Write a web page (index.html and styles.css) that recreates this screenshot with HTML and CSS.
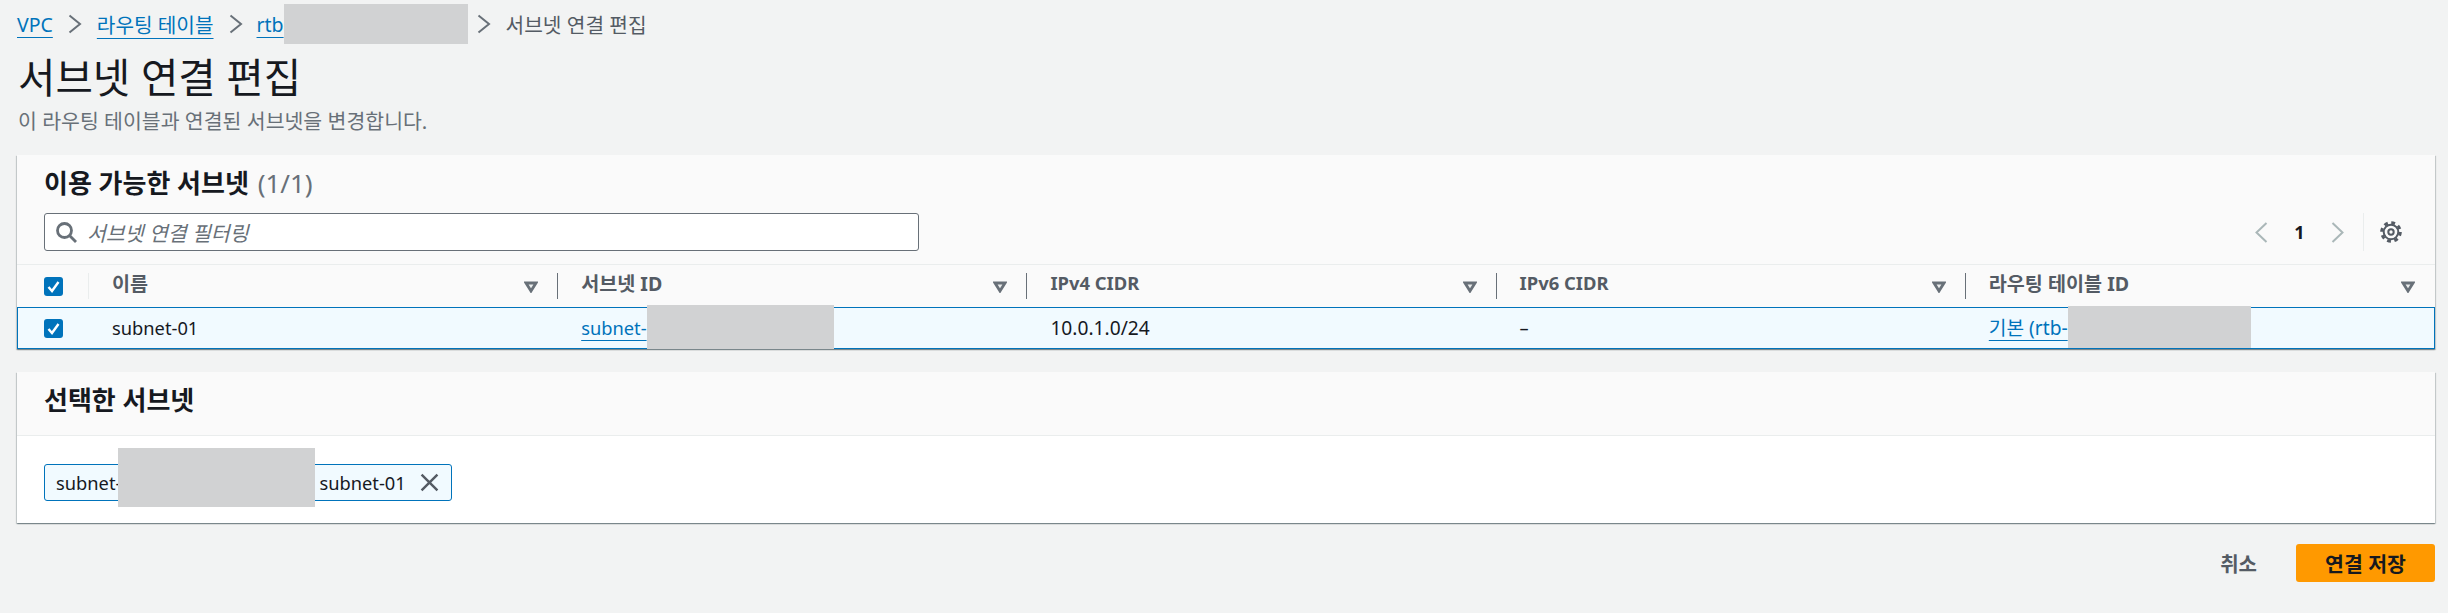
FILE: index.html
```html
<!DOCTYPE html>
<html lang="ko">
<head>
<meta charset="utf-8">
<title>서브넷 연결 편집</title>
<link rel="stylesheet" href="styles.css">
</head>
<body>
<nav class="crumbs">
  <a class="link" href="#">VPC</a>
  <svg class="crumb-sep" viewBox="0 0 14 20"><path d="M1.500 1.500 12 10 1.500 18.500"/></svg>
  <a class="link crumb-ko" href="#">라우팅 테이블</a>
  <svg class="crumb-sep" viewBox="0 0 14 20"><path d="M1.500 1.500 12 10 1.500 18.500"/></svg>
  <span class="crumb-id"><a class="link" href="#">rtb</a><span class="mask mask-crumb"></span></span>
  <svg class="crumb-sep" viewBox="0 0 14 20"><path d="M1.500 1.500 12 10 1.500 18.500"/></svg>
  <span class="crumb-current">서브넷 연결 편집</span>
</nav>
<header class="page-head">
  <h1>서브넷 연결 편집</h1>
  <p>이 라우팅 테이블과 연결된 서브넷을 변경합니다.</p>
</header>

<section class="card">
  <div class="card-head">
    <h2>이용 가능한 서브넷 <span class="count">(1/1)</span></h2>
    <div class="tools">
      <label class="filter">
        <svg class="search" viewBox="0 0 21 21"><circle cx="8.500" cy="8.500" r="7"/><path d="M13.500 13.500 20 20"/></svg>
        <span class="placeholder">서브넷 연결 필터링</span>
      </label>
      <div class="pager">
        <svg class="page-arrow" viewBox="0 0 13 21"><path d="M11.500 1 1.500 10.500 11.500 20"/></svg>
        <span class="page-num">1</span>
        <svg class="page-arrow" viewBox="0 0 13 21"><path d="M1.500 1 11.500 10.500 1.500 20"/></svg>
        <span class="pager-gear">
          <svg class="gear" viewBox="0 0 22 22"><circle class="gear-teeth" cx="11" cy="11" r="9.300"/><circle class="gear-ring" cx="11" cy="11" r="7.300"/><circle class="gear-ring" cx="11" cy="11" r="2.700"/></svg>
        </span>
      </div>
    </div>
  </div>
  <div class="grid grid-head">
    <div class="cell-check th-check"><span class="check"><svg viewBox="0 0 19 19"><path d="M4.500 10 8 14 14.500 5"/></svg></span></div>
    <div class="th"><span>이름</span><svg class="sort" viewBox="0 0 14 12"><path d="M2 2h10L7 10z"/></svg></div>
    <div class="th"><span>서브넷 ID</span><svg class="sort" viewBox="0 0 14 12"><path d="M2 2h10L7 10z"/></svg></div>
    <div class="th th-latin"><span>IPv4 CIDR</span><svg class="sort" viewBox="0 0 14 12"><path d="M2 2h10L7 10z"/></svg></div>
    <div class="th th-latin"><span>IPv6 CIDR</span><svg class="sort" viewBox="0 0 14 12"><path d="M2 2h10L7 10z"/></svg></div>
    <div class="th th-last"><span>라우팅 테이블 ID</span><svg class="sort" viewBox="0 0 14 12"><path d="M2 2h10L7 10z"/></svg></div>
  </div>
  <div class="grid grid-row">
    <div class="cell-check"><span class="check"><svg viewBox="0 0 19 19"><path d="M4.500 10 8 14 14.500 5"/></svg></span></div>
    <div class="td">subnet-01</div>
    <div class="td"><a class="link" href="#">subnet-</a><span class="mask mask-subnet"></span></div>
    <div class="td td-ip">10.0.1.0/24</div>
    <div class="td">–</div>
    <div class="td"><a class="link link-ko" href="#">기본 (rtb-</a><span class="mask mask-rtb"></span></div>
  </div>
</section>

<section class="card card-selected">
  <div class="card-head card-head-selected">
    <h2>선택한 서브넷</h2>
  </div>
  <div class="card-body">
    <div class="token">
      <span>subnet-</span><span class="mask mask-token"></span><span class="token-name">subnet-01</span>
      <svg class="close" viewBox="0 0 18 18"><path d="M1.500 1.500 16.500 16.500M16.500 1.500 1.500 16.500"/></svg>
    </div>
  </div>
</section>

<footer class="actions">
  <span class="cancel">취소</span>
  <span class="save">연결 저장</span>
</footer>
</body>
</html>
```
FILE: styles.css
```css
* { box-sizing: border-box; }
html, body { height: 100%; }
body {
  margin: 0;
  padding: 0 13px 0 17px;
  background: #f2f3f3;
  color: #16191f;
  font-family: "Noto Sans", "Noto Sans CJK KR", sans-serif;
  font-size: 18.300px;
  overflow: hidden;
}
.link {
  color: #0073bb;
  text-decoration: underline;
  text-underline-offset: 5px;
  text-decoration-thickness: 1px;
}
.mask { display: block; background: #d1d2d3; flex: none; }

.crumbs { display: flex; align-items: center; height: 48px; font-size: 19.500px; white-space: nowrap; }
.crumb-ko { font-size: 20.200px; }
.crumb-sep { width: 14px; height: 20px; margin: 0 15px; flex: none; }
.crumb-sep path { fill: none; stroke: #687078; stroke-width: 2; }
.crumb-id { display: flex; align-items: center; margin-left: -1px; }
.mask-crumb { width: 184px; height: 40px; margin-right: -6px; }
.crumb-current { font-size: 20.250px; color: #545b64; }

.page-head { height: 107px; }
h1 { margin: 0; padding: 4px 0 0 1px; font-size: 40.700px; line-height: 50px; font-weight: 400; }
.page-head p { margin: 0; padding-left: 1px; font-size: 20.500px; line-height: 38px; color: #687078; }

.card {
  background: #fff;
  box-shadow: 0 1px 1px 0 rgba(0, 28, 36, .3), 1px 1px 1px 0 rgba(0, 28, 36, .15), -1px 1px 1px 0 rgba(0, 28, 36, .15);
}
.card-head { background: #fafafa; padding: 10px 27px 13px; height: 110px; border-bottom: 1px solid #eaeded; }
h2 { margin: 0; font-size: 26px; line-height: 36px; font-weight: 700; }
.count { font-weight: 400; color: #687078; margin-left: 2px; }
.tools { display: flex; justify-content: space-between; margin-top: 12px; }
.filter {
  display: flex; align-items: center; gap: 10px;
  width: 875px; height: 38px; padding: 0 11px;
  background: #fff; border: 1px solid #687078; border-radius: 3px;
}
.search { width: 21px; height: 21px; flex: none; }
.search circle, .search path { fill: none; stroke: #687078; stroke-width: 2.800; }
.placeholder { font-style: italic; font-size: 20.500px; color: #687078; }
.pager { display: flex; align-items: center; }
.page-arrow { width: 13px; height: 21px; flex: none; }
.page-arrow path { fill: none; stroke: #aab7b8; stroke-width: 2; }
.page-num { width: 63px; text-align: center; font-weight: 700; font-size: 18px; }
.pager-gear {
  display: flex; align-items: center; height: 38px;
  margin-left: 19px; padding: 0 6px 0 16px;
  border-left: 1px solid #eaeded;
}
.gear { width: 22px; height: 22px; display: block; }
.gear-ring { fill: none; stroke: #545b64; stroke-width: 2; }
.gear-teeth { fill: none; stroke: #545b64; stroke-width: 3; stroke-dasharray: 3.800 3.505; }

.grid { display: grid; grid-template-columns: 72px repeat(5, 1fr); align-items: center; height: 42px; }
.grid-head { background: #fafafa; }
.cell-check { display: flex; align-items: center; padding-left: 27px; }
.th-check { height: 26px; border-right: 1px solid #eaeded; }
.check {
  display: flex; width: 19px; height: 19px;
  background: #0073bb; border-radius: 3px;
}
.check svg { width: 19px; height: 19px; }
.check path { fill: none; stroke: #fff; stroke-width: 2.400; }
.th {
  display: flex; align-items: center; justify-content: space-between;
  height: 26px; padding: 0 19px 0 23px;
  font-size: 19.600px; font-weight: 700; color: #545b64;
  border-right: 1px solid #687078; white-space: nowrap;
}
.th-latin { font-size: 18.400px; }
.th span { margin-top: -8px; }
.th-last { border-right: 0; padding-right: 20px; }
.sort { width: 14px; height: 12px; flex: none; margin-top: 1px; }
.sort path { fill: #eaeded; stroke: #687078; stroke-width: 2.800; }
.grid-row {
  background: #f1faff;
  border-top: 1px solid #0073bb;
  border-bottom: 1px solid #0073bb;
  box-shadow: inset 1px 0 #0073bb, inset -1px 0 #0073bb;
}
.td { display: flex; align-items: center; padding: 0 0 2px 23px; height: 40px; white-space: nowrap; }
.td-ip { font-size: 19.200px; }
.mask-subnet { width: 187px; height: 44px; margin: 0; }
.mask-rtb { width: 183px; height: 42px; margin: -1px 0 0; }
.link-ko { font-size: 19.200px; }

.card-selected { margin-top: 23px; height: 151px; }
.card-head-selected { height: 64px; padding-top: 10px; }
.card-body { padding: 28px 27px 0; }
.token {
  display: flex; align-items: center; width: 408px; height: 37px; padding: 0 12px 0 11px;
  background: #f1faff; border: 1px solid #0073bb; border-radius: 3px;
  white-space: nowrap;
}
.mask-token { width: 197px; height: 59px; margin: -10px 4px 0 -3px; }
.close { width: 19px; height: 19px; margin-left: auto; flex: none; }
.close path { fill: none; stroke: #545b64; stroke-width: 2.300; }

.actions { display: flex; justify-content: flex-end; align-items: center; gap: 39px; margin-top: 21px; }
.cancel { font-size: 20px; font-weight: 700; color: #545b64; }
.save {
  display: flex; align-items: center; justify-content: center;
  width: 139px; height: 38px;
  background: #f90; border-radius: 3px;
  font-size: 20.500px; font-weight: 700; color: #16191f;
}
```
